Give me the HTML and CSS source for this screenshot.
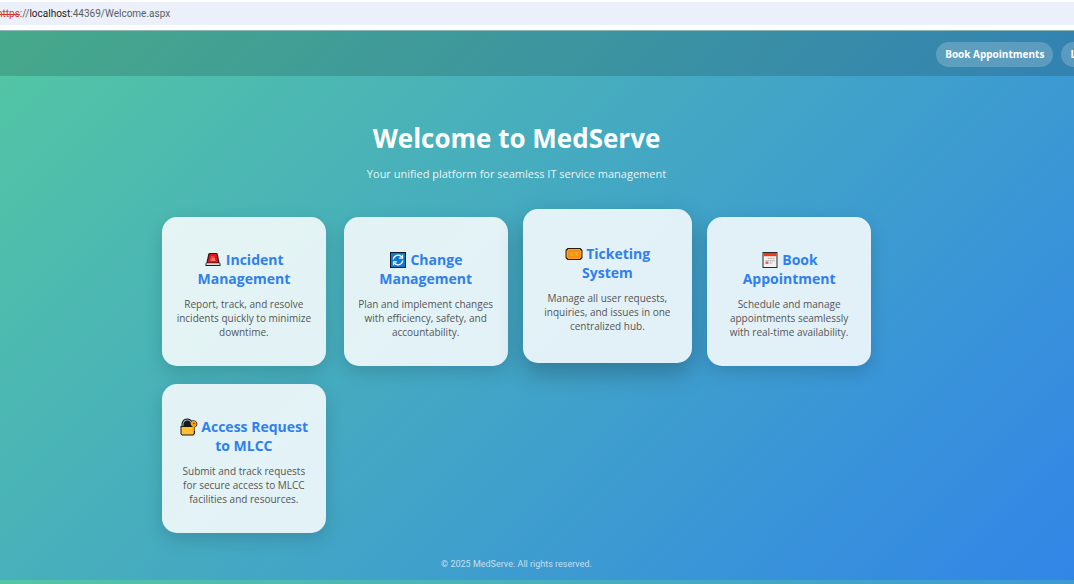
FILE: index.html
```html
<!DOCTYPE html>
<html lang="en">
<head>
<meta charset="utf-8">
<meta name="viewport" content="width=device-width, initial-scale=1">
<title>MedServe</title>
<link rel="stylesheet" href="styles.css">
</head>
<body>
<div class="address-bar">
  <div class="address"><s class="scheme">https</s>://<span class="host">localhost</span>:44369/Welcome.aspx</div>
</div>
<div class="page">
  <header class="topbar">
    <nav class="nav">
      <a class="nav-link" href="#book">Book Appointments</a>
      <a class="nav-link" href="#logout">Logout</a>
    </nav>
  </header>
  <main class="content">
    <h1 class="title">Welcome to MedServe</h1>
    <p class="subtitle">Your unified platform for seamless IT service management</p>
    <section class="cards">
      <article class="card">
        <h2 class="card-title"><svg class="icon" viewBox="0 0 18 18" aria-hidden="true"><path d="M4.200 3.200Q4.500 2 6 2h6q1.500 0 1.800 1.200l1.700 8.300 1 1v2.500h-15v-2.500l1-1z" fill="#211a1b"/><path d="M5.300 3.800Q5.500 3 6.300 3h5.400q.8 0 1 .8l1.600 7.700H3.700z" fill="#e9121c"/><path d="M7 5h3l2 5H6z" fill="#f5463c"/><path d="M8 7h3v3H7z" fill="#ff7561"/><path d="M2.400 12.200h13.200V14H2.400z" fill="#d8d8d8"/></svg> Incident Management</h2>
        <p class="card-text">Report, track, and resolve incidents quickly to minimize downtime.</p>
      </article>
      <article class="card">
        <h2 class="card-title"><svg class="icon" viewBox="0 0 18 18" aria-hidden="true"><path d="M1 1h16v16H1z" fill="#111d2b"/><path d="M2 2h14v14H2z" fill="#0b78d4"/><path d="M4.300 8.500A4.800 4.800 0 0 1 12.800 6M13.700 9.500A4.800 4.800 0 0 1 5.200 12" fill="none" stroke="#fff" stroke-width="1.300"/><path d="M13.500 3.700v3.400h-3.400M4.500 14.300v-3.400h3.400" fill="none" stroke="#fff" stroke-width="1.200"/></svg> Change Management</h2>
        <p class="card-text">Plan and implement changes with efficiency, safety, and accountability.</p>
      </article>
      <article class="card card-raised">
        <h2 class="card-title"><svg class="icon" viewBox="0 0 18 18" aria-hidden="true"><path d="M2.500 3h13L17.500 5v8l-2 2h-13l-2-2V5z" fill="#251e13"/><path d="M3 4h12q0 1.500 1.500 1.500v7Q15 12.500 15 14H3q0-1.500-1.500-1.500v-7Q3 5.500 3 4z" fill="#ffa11f"/><path d="M4 6h10v6H4z" fill="none" stroke="#f17b16"/><path d="M9 6.500l.8 1.700 1.900.2-1.400 1.300.4 1.800L9 10.600l-1.700.9.4-1.800-1.400-1.300 1.900-.2z" fill="#d8a514"/></svg> Ticketing System</h2>
        <p class="card-text">Manage all user requests, inquiries, and issues in one centralized hub.</p>
      </article>
      <article class="card">
        <h2 class="card-title"><svg class="icon" viewBox="0 0 18 18" aria-hidden="true"><path d="M1.500 1h15v16h-15z" fill="#292929"/><path d="M2.500 2h13v14h-13z" fill="#f1f1f1"/><path d="M2.500 2h13v3.200h-13z" fill="#f03a17"/><path d="M7 7.500h7M4.500 9.700H14M4.500 12h7" stroke="#bebebe" stroke-width="1.400" stroke-dasharray="1.700 .5"/><path d="M4.700 10.500h2.400v2.400H4.700z" fill="#ef5b45"/></svg> Book Appointment</h2>
        <p class="card-text">Schedule and manage appointments seamlessly with real-time availability.</p>
      </article>
      <article class="card">
        <h2 class="card-title"><svg class="icon" viewBox="0 0 18 18" aria-hidden="true"><path d="M1.500 8V5.500Q2.500.5 7.500.5q2.800 0 4.200 2Q14 1.500 16 3.300q2.300 2 .8 4.500-.6 1-1.800 1.500V15.500L13.500 17.500H2L.5 16V8z" fill="#17181a"/><path d="M3 8V6q.8-4 4.500-4Q10 2 11 4.300" fill="none" stroke="#a5a9ad" stroke-width="1.100"/><path d="M1.500 9h12.300v6.500l-.8 1H2.300l-.8-.8z" fill="#ffc02e"/><path d="M11 4q2.800-2.300 5 0 1.700 2.300-.1 4.200-.7.600-1.400.7V13h-2V8.600Q9.700 6.700 11 4z" fill="#f6a313"/><circle cx="14" cy="5.500" r=".8" fill="#59380b"/></svg> Access Request to MLCC</h2>
        <p class="card-text">Submit and track requests for secure access to MLCC facilities and resources.</p>
      </article>
    </section>
  </main>
  <footer class="footer">© 2025 MedServe. All rights reserved.</footer>
</div>
<div class="page-end"></div>
</body>
</html>
```
FILE: styles.css
```css
* { box-sizing: border-box; }
body {
  margin: 0;
  background: #fff;
  font-family: "Open Sans", "Noto Sans", sans-serif;
  overflow: hidden;
}
.address-bar {
  padding: 2px 0 5px;
  border-bottom: 1px solid #8fb5b5;
  overflow: hidden;
}
.address {
  margin-left: -3px;
  background: #ebf0fa;
  color: #5a5e63;
  font-family: Roboto, "Open Sans", sans-serif;
  font-size: 10px;
  line-height: 23px;
  white-space: nowrap;
}
.scheme { color: #d0392f; }
.host { color: #202226; }
.page, .page-end {
  background: linear-gradient(135deg, #56cc9d -8%, #2f80ed 108%);
}
.page-end {
  height: 4px;
  background-size: 100% 549px;
}
.topbar {
  display: flex;
  justify-content: flex-end;
  padding: 11px 0 9px;
  background: rgba(0, 0, 0, 0.15);
  overflow: hidden;
}
.nav {
  display: flex;
  gap: 8px;
  margin-right: -40px;
}
.nav-link {
  padding: 0 9px;
  border-radius: 13px;
  background: rgba(255, 255, 255, 0.2);
  color: #fff;
  font-size: 10px;
  font-weight: 700;
  line-height: 25px;
  text-decoration: none;
  white-space: nowrap;
}
.content {
  max-width: 750px;
  margin: 0 auto;
  padding: 44px 41px 0 0;
  text-align: center;
}
.title {
  margin: 0;
  color: #fff;
  font-size: 26px;
  line-height: 36px;
}
.subtitle {
  margin: 8px 0 33px;
  color: rgba(255, 255, 255, 0.9);
  font-size: 11px;
  line-height: 20px;
}
.cards {
  display: grid;
  grid-template-columns: repeat(4, minmax(0, 1fr));
  gap: 18px;
}
.card {
  padding: 33px 14px 27px;
  border-radius: 15px;
  background: rgba(255, 255, 255, 0.85);
  box-shadow: 0 6px 18px rgba(0, 0, 0, 0.15);
}
.card-raised {
  margin: -8px -3px 3px;
  padding: 35px 20px 28px;
  box-shadow: 0 10px 24px rgba(0, 0, 0, 0.25);
}
.card-title {
  margin: 0 0 9px;
  color: #2f80ed;
  font-size: 14px;
  line-height: 19px;
}
.icon {
  width: 18px;
  height: 18px;
  vertical-align: -4px;
}
.card-text {
  margin: 0;
  color: #555;
  font-size: 10px;
  line-height: 14px;
}
.footer {
  padding: 22px 41px 7px 0;
  color: rgba(255, 255, 255, 0.7);
  font-family: Roboto, "Open Sans", sans-serif;
  font-size: 9px;
  line-height: 18px;
  text-align: center;
}
```
